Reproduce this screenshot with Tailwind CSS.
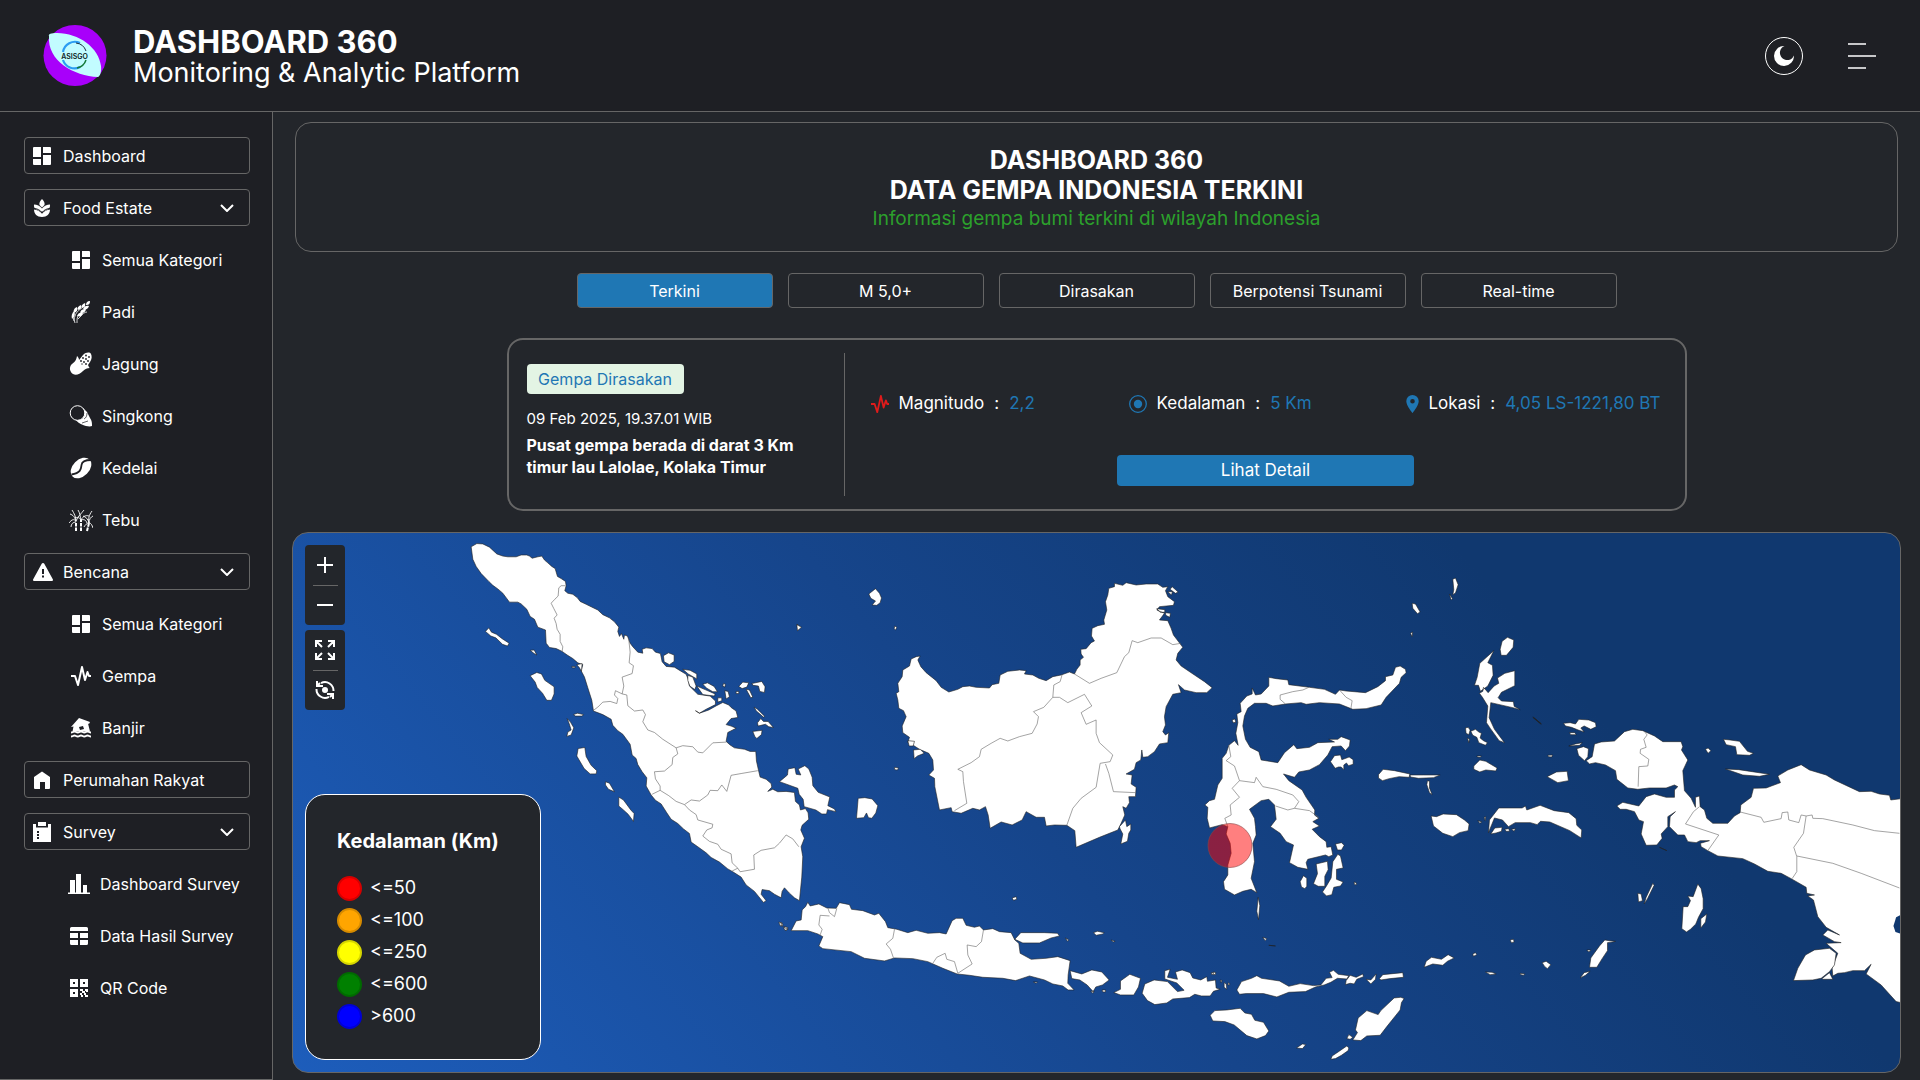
<!DOCTYPE html>
<html lang="id">
<head>
<meta charset="utf-8">
<meta name="viewport" content="width=device-width, initial-scale=1">
<title>Dashboard 360</title>
<script src="https://cdn.jsdelivr.net/npm/@tailwindcss/browser@4"></script>
</head>
<body class="flex min-h-screen flex-col bg-[#23262b] font-[Inter,sans-serif] text-white">
<svg class="hidden" aria-hidden="true">
  <symbol id="i-dash" viewBox="0 0 18 18"><path fill="currentColor" d="M1 0h7v10H0V1a1 1 0 0 1 1-1ZM10 0h7a1 1 0 0 1 1 1v5h-8ZM0 12h8v6H1a1 1 0 0 1-1-1ZM10 8h8v9a1 1 0 0 1-1 1h-7Z"/></symbol>
  <symbol id="i-chev" viewBox="0 0 14 8"><path fill="none" stroke="currentColor" stroke-width="2" d="m1 1 6 6 6-6"/></symbol>
  <symbol id="i-pulse" viewBox="0 0 20 20"><path fill="none" stroke="currentColor" stroke-width="2" stroke-linejoin="round" d="M0 10h4l3 9L11 1l3 13 2.500-8 1.500 4h2"/></symbol>
</svg>

<header class="flex h-28 items-center justify-between border-b border-[#666] bg-[#1e1f24] pr-11 pl-[43px]">
  <div class="flex items-center gap-[26px]">
    <svg class="h-[61px] w-16" viewBox="0 0 64 61" role="img" aria-label="ASISGO">
      <ellipse cx="32" cy="30.500" rx="31.500" ry="30.500" fill="#a800fa"/>
      <path d="M6 11C5 9 8 8 14 8c22 0 42 15 44 33 .6 5-.6 10-3 11C31 51 4 36 6 11Z" fill="#c2fcff"/>
      <path d="M20 27a12 12 0 0 1 17-9M20 35a12 12 0 0 0 17 7" fill="none" stroke="#2b9cf2" stroke-width="2.200"/>
      <path d="M33 18a12 12 0 0 1 10 8" fill="none" stroke="#1d2e3e" stroke-width="1"/>
      <path d="M43 35a12 12 0 0 1-9 8" fill="none" stroke="#157a3a" stroke-width="1.500"/>
      <text x="31.500" y="33.500" text-anchor="middle" font-family="Inter,sans-serif" font-weight="600" font-size="7" fill="#0b1c24">ASISGO</text>
    </svg>
    <div class="pt-1">
      <p class="text-[31px] leading-[30px] font-bold">DASHBOARD 360</p>
      <p class="text-[27px] leading-[31px]">Monitoring &amp; Analytic Platform</p>
    </div>
  </div>
  <div class="flex items-center gap-[45px]">
    <button type="button" aria-label="Mode gelap" class="flex size-[38px] items-center justify-center rounded-full border border-white">
      <svg class="size-5" viewBox="0 0 20 20"><path fill="#fff" d="M10.500 0A10 10 0 1 0 20 9.500 7.300 7.300 0 1 1 10.500 0Z"/></svg>
    </button>
    <button type="button" aria-label="Menu">
      <svg class="h-[26px] w-7" viewBox="0 0 28 26"><path stroke="#fff" stroke-width="1.600" d="M0 1h18M0 13h28M0 25h18"/></svg>
    </button>
  </div>
</header>

<div class="flex flex-1">
  <nav class="w-[273px] shrink-0 border-r border-b border-[#666] bg-[#1e1f24] px-6 pt-[25px] text-base">
    <ul class="flex w-[226px] flex-col gap-[15px]">
      <li><a href="#" class="flex h-[37px] items-center gap-3 rounded border border-[#666] pl-2"><svg class="size-[18px]"><use href="#i-dash"/></svg>Dashboard</a></li>
      <li><button type="button" class="flex h-[37px] w-full items-center gap-3 rounded border border-[#666] pr-[15px] pl-2">
        <svg class="size-[18px]" viewBox="0 0 18 18"><path fill="#fff" d="M9 0c2 2 3 4 2.500 6L9 8.500 6.500 6C6 4 7 2 9 0ZM1 5.500c3 0 6 1.500 8 4 2-2.500 5-4 8-4 .3 2-.5 3.500-1.500 4.500L9 13 2.500 10C1.500 9 .7 7.500 1 5.500ZM1 10.500c3 .3 6 1.700 8 4.200 2-2.500 5-3.900 8-4.200 0 4.500-3 7.500-8 7.500s-8-3-8-7.500Z"/><path fill="none" stroke="#1e1f24" d="M1 9.500c3 0 6 1.500 8 4 2-2.500 5-4 8-4"/></svg>
        Food Estate<svg class="ml-auto h-2 w-3.5"><use href="#i-chev"/></svg></button></li>
      <li><a href="#" class="flex h-[37px] items-center gap-[9px] pl-[45px]"><svg class="mx-[3px] size-[18px]"><use href="#i-dash"/></svg>Semua Kategori</a></li>
      <li><a href="#" class="flex h-[37px] items-center gap-[9px] pl-[45px]">
        <svg class="size-6" viewBox="0 0 24 24" fill="#fff"><path d="M21 1c-3 0-4 2-4 4 3 0 4-1 4-4ZM16 3c-3 1-4 3-3 5 2-1 4-2 3-5ZM12 5c-3 1-4 3-3 5 3-1 4-2 3-5ZM8 7c-3 1-4 4-3 6 3-1 4-3 3-6ZM5 11c-2 2-3 5-2 8 2-2 4-4 2-8ZM20 6c-2-1-5 0-6 3 3 1 5 0 6-3ZM17 9.500c-3-1-5 0-6 3 3 1 5 0 6-3ZM14 13c-3-1-5 0-6 3 3 1 5 0 6-3Z"/><path d="M16 6C11 9 7 12 6 16c-1 2-1 4 0 7M10 14c-2 3-2 5-2 9M12 16c1-2 4-4 6-4M9 19l3-3M4 17l1 4" fill="none" stroke="#fff" stroke-width=".8"/></svg>Padi</a></li>
      <li><a href="#" class="flex h-[37px] items-center gap-[9px] pl-[45px]">
        <svg class="size-6" viewBox="0 0 24 24"><path fill="#fff" d="M8 4c1 1 2 2 2 4l4-5c3-3 7-3 8-1s1 5-1 8l-2 3c1 2 1 3 2 3-3 0-5 1-7 3-3 3-7 5-10 3S0 16 2 13c2-2 5-3 6-9Z"/><g fill="#1e1f24"><circle cx="17" cy="3.500" r=".9"/><circle cx="20" cy="5" r=".9"/><circle cx="14" cy="6" r=".9"/><circle cx="17" cy="7" r=".9"/><circle cx="12" cy="9" r=".9"/><circle cx="15" cy="10" r=".9"/><circle cx="19" cy="9" r=".9"/><circle cx="17" cy="12" r=".9"/><circle cx="13" cy="12" r=".7"/></g></svg>Jagung</a></li>
      <li><a href="#" class="flex h-[37px] items-center gap-[9px] pl-[45px]">
        <svg class="size-6" viewBox="0 0 24 24"><path fill="#fff" d="m14 4 4 4c1 2 2 4 3 6 2 3 2 5 2 8-2 1-7 0-9-1-3-1-6-3-8-6Z"/><circle cx="8.500" cy="9" r="7.300" fill="#1e1f24" stroke="#fff"/><path d="m13 19 6-2M18 9c0 3-1 5-3 6" fill="none" stroke="#1e1f24" stroke-width=".7"/></svg>Singkong</a></li>
      <li><a href="#" class="flex h-[37px] items-center gap-[9px] pl-[45px]">
        <svg class="size-6" viewBox="0 0 24 24"><ellipse cx="12" cy="12" rx="12" ry="8.300" transform="rotate(-45 12 12)" fill="#fff"/><path d="M22 4c-4 0-9 1-9.500 5C12 13 12 17 2.500 18.500" fill="none" stroke="#1e1f24" stroke-width="1.800"/></svg>Kedelai</a></li>
      <li><a href="#" class="flex h-[37px] items-center gap-[9px] pl-[45px]">
        <svg class="size-6" viewBox="0 0 24 24" fill="none" stroke="#fff"><path stroke-width="2" stroke-dasharray="3.500 1" d="M7 23v-9M12 23V12M18 23l2-8"/><path stroke-width=".9" d="M7 14C6 9 4 7 1 6M7 13C5 11 3 11 0 15M7 13c0-4-2-8-4-11M7 13c2-5 5-7 8-11M12 12c-1-4-1-7-3-10M12 12c-2-3-4-3-6-2M12 12c2-4 5-5 8-4M12 12c3-1 5 0 6 3M20 15c-1-4 0-8 3-12M20 15c0-4 2-6 4-7M20 15c-1-4-3-6-6-7M20 15c2 0 3 2 4 5M20 15c-2 0-4 2-5 4M7 14c-3 0-5 2-5 5"/></svg>Tebu</a></li>
      <li><button type="button" class="flex h-[37px] w-full items-center gap-2.5 rounded border border-[#666] pr-[15px] pl-2">
        <svg class="h-[18px] w-5" viewBox="0 0 20 18"><path fill="#fff" d="M10 0c.6 0 1 .3 1.300.8l8.500 15.400c.5 1-.1 1.800-1.300 1.800h-17C.300 18-.3 17.200.2 16.200L8.700.8C9 .3 9.400 0 10 0Z"/><path stroke="#1e1f24" stroke-width="2" d="M10 6v5M10 12.500v2"/></svg>
        Bencana<svg class="ml-auto h-2 w-3.5"><use href="#i-chev"/></svg></button></li>
      <li><a href="#" class="flex h-[37px] items-center gap-[9px] pl-[45px]"><svg class="mx-[3px] size-[18px]"><use href="#i-dash"/></svg>Semua Kategori</a></li>
      <li><a href="#" class="flex h-[37px] items-center gap-[9px] pl-[45px]"><svg class="mx-0.5 size-5"><use href="#i-pulse"/></svg>Gempa</a></li>
      <li><a href="#" class="flex h-[37px] items-center gap-[9px] pl-[45px]">
        <svg class="mx-0.5 size-5" viewBox="0 0 20 20"><path fill="#fff" d="M8 0 19 4l-1 2-1-.5 2 8H1.500l1-5L0 9 8 0Z"/><path fill="#1e1f24" d="m8 9 4-1 1 3-4 1Z"/><path fill="none" stroke="#fff" stroke-width="1.800" d="M0 14.500c2 0 2-1 3.500-1s1.500 1 3.300 1 1.500-1 3.200-1 1.500 1 3.300 1 1.500-1 3.200-1 1.500 1 3.500 1M0 18.500c2 0 2-1 3.500-1s1.500 1 3.300 1 1.500-1 3.200-1 1.500 1 3.300 1 1.500-1 3.200-1 1.500 1 3.500 1"/></svg>Banjir</a></li>
      <li><a href="#" class="flex h-[37px] items-center gap-3 rounded border border-[#666] pl-2">
        <svg class="size-[18px]" viewBox="0 0 18 18"><path fill="#fff" d="M9 .5 17 6v11a1 1 0 0 1-1 1h-4v-7H7v7H2a1 1 0 0 1-1-1V6Z"/></svg>Perumahan Rakyat</a></li>
      <li><button type="button" class="flex h-[37px] w-full items-center gap-3 rounded border border-[#666] pr-[15px] pl-2">
        <svg class="h-5 w-[18px]" viewBox="0 0 18 20"><path fill="#fff" d="M0 2h3v3.500h12V2h3v18H0ZM5 0h8v4H5Z"/><path fill="#1e1f24" d="M4 9h2v2H4ZM4 12h2v2H4ZM4 15h2v2H4Z"/></svg>
        Survey<svg class="ml-auto h-2 w-3.5"><use href="#i-chev"/></svg></button></li>
      <li><a href="#" class="flex h-[37px] items-center gap-[9px] pl-[43px]">
        <svg class="mx-px h-5 w-[22px]" viewBox="0 0 22 20"><path fill="#fff" d="M0 18.500h2V6h5v12.500h1V0h5v18.500h2V11h4v7.500h3V20H0Z"/></svg>Dashboard Survey</a></li>
      <li><a href="#" class="flex h-[37px] items-center gap-[9px] pl-[43px]">
        <svg class="mx-[3px] size-[18px]" viewBox="0 0 18 18"><path fill="#fff" d="M1.500 0h15A1.500 1.500 0 0 1 18 1.500V4H0V1.500A1.500 1.500 0 0 1 1.500 0ZM0 6h8v5H0ZM10 6h8v5h-8ZM0 13h8v5H1.500A1.500 1.500 0 0 1 0 16.500ZM10 13h8v3.500a1.500 1.500 0 0 1-1.500 1.500H10Z"/></svg>Data Hasil Survey</a></li>
      <li><a href="#" class="flex h-[37px] items-center gap-[9px] pl-[43px]">
        <svg class="mx-[3px] size-[18px]" viewBox="0 0 18 18"><path fill="#fff" fill-rule="evenodd" d="M0 0h8v8H0ZM3 3v2h2V3ZM10 0h8v8h-8ZM13 3v2h2V3ZM0 10h8v8H0ZM3 13v2h2v-2ZM10 10h3v2h-3ZM15 10h3v3h-2v-1h-1ZM12 12h3v2h-3ZM10 14h2v2h-2ZM14 14h2v2h2v2h-3v-2h-1ZM11 16h2v2h-2Z"/></svg>QR Code</a></li>
    </ul>
  </nav>

  <main class="flex min-w-0 flex-1 flex-col px-[19px] pt-2.5 pb-[7px]">
    <section class="mx-[3px] flex h-[130px] flex-col items-center justify-center rounded-2xl border border-[#666] pt-1">
      <h1 class="text-center text-[25px] leading-[30px] font-bold">DASHBOARD 360<br>DATA GEMPA INDONESIA TERKINI</h1>
      <p class="text-[19px] leading-7 text-[#2ca02c]">Informasi gempa bumi terkini di wilayah Indonesia</p>
    </section>

    <div class="mt-[21px] flex justify-center gap-[15px] text-base">
      <button type="button" class="h-[35px] w-[196px] rounded border border-[#666] bg-[#1f77b4]">Terkini</button>
      <button type="button" class="h-[35px] w-[196px] rounded border border-[#666]">M 5,0+</button>
      <button type="button" class="h-[35px] w-[196px] rounded border border-[#666]">Dirasakan</button>
      <button type="button" class="h-[35px] w-[196px] rounded border border-[#666]">Berpotensi Tsunami</button>
      <button type="button" class="h-[35px] w-[196px] rounded border border-[#666]">Real-time</button>
    </div>

    <section class="mx-auto mt-[30px] flex w-[1180px] rounded-2xl border-2 border-[#666] py-[13px]">
      <div class="w-[336px] border-r border-[#666] pt-[11px] pr-6 pb-[18px] pl-[18px]">
        <span class="flex h-[30px] w-[157px] items-center justify-center rounded bg-[#e3f4e4] text-base text-[#1f77b4]">Gempa Dirasakan</span>
        <p class="mt-[14px] text-[15px] leading-[22px]">09 Feb 2025, 19.37.01 WIB</p>
        <p class="mt-1 text-base leading-[22px] font-bold">Pusat gempa berada di darat 3 Km<br>timur lau Lalolae, Kolaka Timur</p>
      </div>
      <div class="flex flex-1 flex-col items-center pt-[39px] pr-6 pl-[26px] text-[17px]">
        <div class="flex h-6 w-full items-center justify-between">
          <p class="flex items-center gap-2.5"><svg class="size-[18px] text-[#e01b1b]"><use href="#i-pulse"/></svg>Magnitudo<span>:</span><span class="text-[#1f77b4]">2,2</span></p>
          <p class="flex items-center gap-2.5"><svg class="size-[18px]" viewBox="0 0 18 18"><circle cx="9" cy="9" r="8.300" fill="none" stroke="#1f77b4" stroke-width="1.300"/><circle cx="9" cy="9" r="4.200" fill="#1f77b4"/></svg>Kedalaman<span>:</span><span class="text-[#1f77b4]">5 Km</span></p>
          <p class="flex items-center gap-2.5"><svg class="h-[18px] w-[13px]" viewBox="0 0 13 18"><path fill="#1f77b4" fill-rule="evenodd" d="M6.500 0A6.200 6.200 0 0 1 12.700 6.300C12.700 11 6.500 18 6.500 18S.3 11 .3 6.300A6.200 6.200 0 0 1 6.500 0Zm0 4a2.300 2.300 0 1 0 0 4.600 2.300 2.300 0 0 0 0-4.600Z"/></svg>Lokasi<span>:</span><span class="text-[#1f77b4]">4,05 LS-1221,80 BT</span></p>
        </div>
        <button type="button" class="mt-[39px] h-[31px] w-[297px] rounded bg-[#1f77b4]">Lihat Detail</button>
      </div>
    </section>

    <section class="relative mt-[21px] min-h-[541px] flex-1 overflow-hidden rounded-2xl border border-[#666] bg-[linear-gradient(50deg,#1d5dbb,#16458b_46%,#10386f_78%)]" aria-label="Peta gempa Indonesia">
      <svg class="absolute inset-0 h-full w-full" viewBox="293 533 1608 539" preserveAspectRatio="xMidYMid slice">
        <g fill="#fff" stroke="#222" stroke-width="1.800" stroke-linejoin="round">
          <!-- Sumatra -->
          <g transform="translate(290 520) scale(.3333 .3571)">
            <path d="M545,75L562,66 580,67 600,76 622,95 640,101 655,103 680,103 695,98 712,98 720,101 728,107 745,103 757,101 765,112 775,120 787,130 797,136 804,158 815,164 828,172 830,184 826,198 835,205 850,208 864,218 872,228 890,236 905,243 925,252 940,265 960,274 975,285 988,300 985,312 990,326 996,318 1003,334 1005,322 1014,325 1022,345 1030,355 1045,370 1060,373 1058,362 1070,358 1088,360 1098,370 1113,374 1118,397 1130,410 1155,412 1172,422 1190,432 1197,448 1200,465 1225,488 1262,493 1278,507 1278,517 1250,530 1230,541 1218,534 1230,541 1258,532 1281,520 1300,511 1318,518 1325,525 1340,535 1345,553 1325,556 1310,573 1325,577 1340,583 1315,595 1310,620 1322,630 1335,638 1365,642 1382,648 1399,648 1401,675 1407,700 1412,720 1430,726 1445,738 1447,748 1435,760 1450,754 1465,761 1490,760 1515,763 1518,788 1530,798 1533,812 1548,808 1556,820 1558,838 1538,855 1534,868 1545,891 1535,915 1540,943 1537,1000 1530,1066 1515,1058 1500,1045 1485,1030 1478,1040 1475,1058 1455,1048 1440,1038 1418,1035 1415,1048 1430,1066 1422,1071 1408,1055 1395,1040 1370,1022 1355,1000 1330,985 1315,977 1290,958 1265,945 1250,932 1225,915 1205,902 1200,878 1182,865 1165,850 1145,838 1132,820 1115,795 1098,785 1085,770 1070,745 1072,722 1058,705 1045,685 1040,668 1028,658 1022,628 1000,600 985,590 970,575 965,558 940,545 912,535 907,505 895,470 885,440 875,422 880,405 865,400 850,388 833,378 818,368 800,360 780,357 770,345 768,308 745,300 735,278 722,270 712,250 695,235 685,230 660,230 640,205 625,193 610,183 598,172 575,150 560,130 550,110Z"/>
            <path d="M588,312l10-10 8,12 15,6 18,13 20,12-5,8-15-5-20-18-15-5ZM722,365l12-1 8,14-8-4ZM847,410l10,0 0,4-9,0ZM862,405l16-3-2,22-6-10ZM722,436l20-9 14,4 10,18 28,18 0,20-8,18-14,0-13-20-16-16-6-15ZM852,545l12-4 18,4-4,4-20,0ZM833,556l10,10 10,16-8,20-13,4 3-12 10-6-6-18ZM866,640l20-3 4,25 15,25 17,15-2,9-18,0-18-15-22-35ZM948,733l12,4 15,24-18-7-9-12ZM988,776l14,8 22,28 10,10-2,22-16-20-14-12-14-11ZM1122,380l15-8 17,6 0,18-14,9-16-8ZM1180,418l22,3 20,10 0,14-26-14ZM1195,435l15,5 10,25-4,10-15-10-6-16ZM1240,460l14-4 20,10 10,15-14,0-18-10ZM1222,465l25,10 30,12-2,6-35-4ZM1285,498l12,0 0,8-12,4ZM1302,458l6,2-2,8-6-3ZM1306,478l10,2 4,15-10,6ZM1340,480l8,0 0,6-8,0ZM1348,466l12,-12 18,2-6,12-14,4ZM1370,474l10,2 10,20-6,2ZM1387,458l30-6 10,15-2,16-14-3-4-15-16-2ZM1394,524l10,6 22,20-4,2-22-18ZM1404,568l10-12 8,8 14,0 16,17-14-2-10-7-22,5ZM1390,592l28-3-2,12-14,11-6-6ZM1523,292l10,7-8,10ZM1468,1126l10,2 2,8-8,0ZM1484,1138l12,4-6,8Z"/>
            <path fill="none" stroke="#666" d="M828,184L815,184 808,190 806,213 796,222 785,233 793,248 803,266 794,275 800,290 803,306 812,320 812,340 820,355 818,368M1018,335L1022,370 1019,400 1032,408 1028,430 1010,436 998,440 1003,465 998,487M998,487L978,478 975,490 985,500 982,514 962,508 940,510 925,524 912,533M998,487L1012,490 1015,520 1035,535 1060,532 1068,545 1060,565 1075,588 1095,595 1120,614 1160,638 1180,632 1210,635 1225,650 1240,652 1270,624 1310,622M1160,638L1165,655 1150,665 1148,685 1125,703 1095,705 1098,725 1112,745 1112,757 1088,768M1112,757L1138,772 1160,788 1185,797 1205,784 1230,787 1255,770 1262,757 1285,758 1297,742 1312,760 1325,715 1355,710 1405,702M1185,797L1200,812 1220,825 1225,840 1270,852 1268,862 1252,868 1240,885 1260,900 1285,908 1295,922 1325,935 1328,960 1345,975 1352,985 1395,978 1393,938 1415,925 1455,918 1470,905 1490,882 1510,893 1528,915M1345,975L1328,983"/>
          </g>
          <!-- Kalimantan, Jawa, Bangka Belitung, Bali, Nusa Tenggara Barat -->
          <g transform="translate(780 560) scale(.3333)">
            <path d="M395,297L410,290 422,288 415,300 424,320 440,338 455,350 470,362 485,382 508,396 535,388 550,380 570,378 590,382 630,384 638,374 658,370 662,345 685,334 720,330 740,332 735,342 760,345 778,355 800,362 820,350 845,345 870,336 885,342 892,328 902,315 902,300 912,292 905,282 904,268 920,266 935,248 945,243 936,228 938,205 955,197 975,193 973,180 982,150 978,125 985,105 988,85 1005,80 1005,70 1030,76 1040,68 1070,75 1100,72 1135,72 1150,82 1165,80 1158,92 1165,110 1185,125 1182,136 1140,140 1132,150 1155,160 1140,180 1165,182 1175,205 1182,225 1210,262 1195,280 1190,300 1205,318 1245,345 1275,365 1298,383 1282,398 1250,398 1215,390 1197,374 1205,398 1180,403 1160,440 1155,470 1158,495 1150,515 1158,525 1168,518 1165,548 1140,552 1125,575 1105,590 1090,592 1087,570 1084,600 1070,608 1065,628 1040,642 1058,645 1055,672 1070,682 1068,710 1048,710 1050,728 1040,745 1030,740 1036,765 1025,790 1015,810 960,832 890,862 886,812 862,796 825,795 800,798 795,772 770,772 740,755 728,780 698,795 665,786 632,805 626,765 618,740 600,750 580,745 545,760 518,755 515,743 480,750 474,720 466,680 465,655 448,645 462,630 460,600 448,580 420,568 400,555 385,548 390,532 370,518 368,498 380,470 372,452 358,445 355,420 350,400 358,395 355,370 368,350 370,330 390,318ZM1178,80l18,16-8,4-16-12ZM1165,95l14,0-3,10ZM1132,146l24,3 0,8-14,0ZM1158,158l15,2-2,12-12-6Z"/>
            <path d="M268,102l20-16 12,14 6,14-4,14-10,8-14-1 10-12-14-8ZM52,194l14,8-12,10ZM346,198l6,4-4,8-4-4ZM385,542l20,2-4,14-12,0ZM402,570l20-2 12,12-20,8-10,8ZM345,622l12,2-3,6-8-1ZM0,665l24-20 2-18 20-4 4,20 14,2-8-18 20-10 12,10 10,25 2,25 16,20 35,14-6,26 20,10 4,8-25-6-3,13-14,0-18-12-35-10-3-22-12-15-4-18ZM236,715l20-2 22,4 17,20-6,22-12,16-10-2-6-14-8,14-22,2ZM1020,800l18-20 4,20 12-8 0,18-6,10-4,24-20,8 6-30-8-15ZM698,1014l12-4 2,8-10,3Z"/>
            <path d="M35,1112L50,1083 65,1080 68,1050 78,1040 85,1027 92,1038 118,1032 142,1044 170,1045 180,1028 210,1034 216,1048 250,1052 285,1065 298,1060 318,1085 325,1103 352,1108 385,1118 410,1111 445,1120 480,1118 500,1122 518,1082 530,1075 550,1075 560,1096 585,1102 600,1098 612,1110 640,1106 660,1115 695,1118 706,1140 718,1150 722,1180 755,1198 800,1195 835,1190 872,1202 866,1245 865,1270 884,1290 866,1290 850,1278 820,1272 795,1260 750,1248 708,1262 670,1255 610,1252 570,1246 533,1242 490,1225 445,1205 400,1196 345,1194 315,1203 255,1195 215,1175 130,1166 118,1158 130,1130 115,1122 85,1112ZM706,1138l18-20 70,0 40,2 6,8-25,6-35,15-50,0ZM858,1134l10,6-4,4ZM942,1118l12-4 20,4-4,4-20,4ZM995,1140l12,4-6,2ZM4,1088l6,6-3,6ZM12,1102l14,6-10,3ZM872,1232l35,10 30-12 30,6 22,24-20,15-20,6-8,14-18-20-22-15-24-4ZM968,1290l10,0 0,6-8,0ZM934,1294l10,0-4,6ZM1003,1298l20-10 0-25 28-20 32,12-6,26-14,24-40,0ZM1088,1300l8-28 28-12 40,5 30,30 20-4-22-22-36-12 0-25 16-4-8,24 30,6-6-22 20-6 24,8 8,16 24,6 18-10 2,14 24-4 2,24 12,4-20,6-10,14-26,0-20-5-16,10-50,4-18,12-36,5-22-12ZM1296,1238l10,0-2,6-8-1ZM762,1266l12,0-4,4Z"/>
            <path fill="none" stroke="#666" d="M848,344L842,365 823,375 820,412 793,442 762,455 777,470 773,492 758,520 720,530 685,543 662,535 635,550 605,568 600,590 575,608 535,628 550,635 552,665 562,730 525,752M820,412L840,412 865,428 915,403 937,438 905,458 920,493 950,480 950,520 960,548 1000,585 992,605 962,610 950,682 905,715 880,745 862,796M885,342L930,370 965,355 1012,338 1035,290 1048,278 1058,242 1075,248 1115,234 1145,234 1180,254 1204,250M978,612L988,640 1002,695 1068,698M145,1044L150,1058 165,1070 172,1045M150,1068L122,1066 118,1095 128,1108 122,1125M345,1108L340,1135 320,1152 333,1168 342,1194M612,1110L606,1145 590,1160 563,1155 565,1185 578,1212 535,1240 525,1205 502,1198 497,1180 472,1192 460,1210"/>
          </g>
          <!-- Sulawesi, Nusa Tenggara Timur, Maluku -->
          <g transform="translate(1160 560) scale(.3333)">
            <path d="M208,556L225,542 236,556 229,520 235,488 232,462 245,455 242,430 262,408 278,402 278,384 288,405 305,402 328,378 328,352 350,356 385,360 388,374 450,382 495,388 528,403 540,390 560,393 618,398 655,380 678,362 678,350 700,345 708,322 722,318 738,328 740,338 725,352 720,370 680,412 665,435 620,446 580,448 540,432 480,428 440,433 425,428 378,432 340,438 320,430 285,430 265,445 255,468 250,498 258,538 272,562 298,575 305,600 355,608 375,578 403,554 412,566 450,562 475,548 525,546 508,538 535,538 545,530 572,540 570,558 558,572 545,558 518,560 505,585 480,614 450,630 418,636 405,652 372,642 388,662 428,690 440,712 466,750 465,765 478,775 460,785 480,798 458,808 480,830 500,845 502,862 515,860 520,885 508,890 498,885 445,898 440,908 445,928 415,922 390,908 402,855 380,845 362,820 333,800 350,778 345,735 328,718 305,722 270,748 285,775 288,800 290,825 280,850 285,905 275,955 292,998 275,988 250,994 225,1005 195,988 192,965 205,945 205,915 215,880 212,850 200,822 205,800 188,794 150,804 143,775 145,742 136,735 150,722 165,718 175,675 188,655 188,595 200,580Z"/>
            <path d="M218,480l8-3 3,10-8,1ZM513,605l12-18 18-2 4,14 12-4 10-4 12,8 0,14-14,4-6-8-8,6 0,14-8-8-8,0-10,4ZM528,852l18-4 8,8-8,14-12,0ZM422,965l10-18 10,8 0,24-6,7-10-5ZM470,912l34-8 2,25-10,20 0,30-20,0-14-8 12-30ZM520,905l15-22 8,5 8,36-20,4 0,30 20,8-8,12-20,4-6,22-16,4-12-12 12-18 14-24ZM584,966l6,2 1,6-6,0ZM296,1012l5,25-4,42-5-25ZM310,1132l12,4-5,6ZM328,1156l20,2ZM880,58l8-4 8,20-8,25-8,5 3-15ZM870,102l9,14-4,4ZM758,130l10,2 14,24-8,5-14-16ZM753,220l6-4-1,14ZM1022,268l6-24 16-12 19,8-2,22-20,24-16,0ZM945,376l8-24 8-42 42-38-18,36 14,8 2,30-16,32-22,16-6-18ZM960,400l10-6 2-12 14,16 18,-20 14-8-4-16 22-14 30-8 0,45-40,20-10,16 10,10 36,2 2,14 18,10-22-6-66,-15-5,45 16,35 30,40-16-6-26-36-12-18 4-50-16-26ZM918,504l8-2 6,8-4,14-8-4ZM924,534l6,4-2,10ZM934,514l14-6 10,8 8,4-4,14 10,8 12,6-6,8-10-4-10-4-6-16-12-6ZM952,588l14,0-4,4-8-1ZM943,618l18-18 18,4 34,20-4,9-30-3-18,6-18-8ZM1122,472l24,20ZM657,644l14-16 34,4 46,10-2,10-30-2-30,6-20,6-12-8ZM752,645l40,0 50,0-20,8-45,2-24-4ZM804,662l6,2 0,20 8,20-8-6-8-24ZM815,768l16,2 20-8 40,2 24,16 14,12-3,20-26,6-20,12-30-10-28-22ZM955,782l12,4-6,4ZM974,772l5-2-2,12ZM990,780l28-36 70,0 10-6 4,12 40-14 42,16 44,6 22,18 2,20 15,14-2,24-34-22-60-26-28-2-10,10-20-6-46,0-20,12-18-20-24-6-18,44ZM994,822l12-18 22,-2-2,12-16,5ZM1036,808l12-2 2,8-10,0ZM1056,808l12-2-4,8ZM1165,586l14-1-2,6-10-1ZM1163,650l28-14 32-2 4,28-32,6ZM1052,1140l10-2 2,8-8,2ZM940,1182l8-4 4,6-10,5ZM794,1222l6-18 16-12 30,6 20-14 18,10-20,10-14,12-30-4ZM978,1236l20,1 12,5-18,2ZM1082,1240l14,2-4,4-8-2ZM1148,1208l12-4 14,10-10,12-8-6Z"/>
            <path d="M232,1290l14-25 30-10 16-8 14,8 54,8 28,16 34-8 40,6 22,-2 16-20 18-2-8-16 12-6 14,12 32,4-6,10-28,-2-20,12-20,8-26,6-30,14-50,2-36,14-40-10-52,0-20,2ZM162,1236l7,2-2,6-6-2ZM182,1260l6,2-3,6ZM194,1268l6,4 2,16-8-6ZM206,1268l6,4-6,4ZM560,1262l12-16 18,6 20-10 2,8-20,8-8,14-12-2-14,4ZM620,1258l14,2 16,-18-2,16-14,14ZM660,1256l10-12 60-6 2,14-40,4-28,4ZM152,1366l14-14 36-2 40-5 14,14 20,4 10,18 26,6 16,26-10,14-26,10-30-10-38-32-28-10-36-2ZM411,1464l18-12 10,2-10,12ZM514,1498l4-10 18-12 26-18 6,6-2,8-20,14-18,10ZM562,1436l6-12 12,8-8,6ZM580,1440l14-22-6-8 8-36 26-22 34,12 8-12 40-38 20-2 10,4-8,12-4,22-40,50-20,26-40,2-18,14Z"/>
            <path fill="none" stroke="#666" d="M208,556L214,590 200,602 225,618 240,662 285,668 290,652 310,680 350,688 400,705 418,725 405,745 385,750 348,738M405,745L450,752 478,772M240,662L218,685 240,712 212,735 215,765 196,775 205,800M448,382L430,390 400,395 362,405 362,418 378,432M540,390L560,412 578,422 574,447"/>
          </g>
          <!-- Papua and the islands around it -->
          <g transform="translate(1500 560) scale(.3333)">
            <path d="M285,552L305,546 345,543 375,515 400,508 430,512 465,528 490,545 545,545 550,560 546,570 565,600 550,632 555,692 575,715 588,742 588,712 600,708 602,740 615,750 622,775 640,790 685,790 705,768 722,758 724,735 755,712 762,685 800,684 843,668 835,648 865,630 905,614 930,630 980,645 1005,660 1080,695 1115,694 1140,702 1170,706 1174,720 1215,715 1215,1330 1190,1325 1145,1275 1100,1242 1115,1213 1095,1232 1060,1232 1035,1238 1015,1240 1000,1248 998,1225 1015,1180 980,1150 1025,1148 1005,1145 970,1125 985,1110 1020,1125 980,1102 955,1070 942,1020 925,1008 945,1005 922,1000 920,982 875,956 845,940 805,934 765,912 730,896 655,888 625,872 605,860 603,850 630,842 602,842 590,848 565,845 555,825 535,825 510,800 512,770 528,755 505,770 505,800 485,822 488,835 472,855 440,856 425,822 432,785 418,780 405,755 380,748 362,748 352,738 370,727 418,738 440,710 465,702 500,712 525,712 525,690 535,680 525,675 500,684 450,684 415,688 385,684 352,658 348,632 318,615 288,608 270,612 260,602 278,590Z"/>
            <path d="M192,490l20-2 16,4 10-14 30,2 20,8 2,12-16,8-20-10-10,6 10,12-18-6-20-8-18-4ZM210,518l16,0 4,6-16,0ZM208,558l20-6 20-4-8,8ZM232,566l20-6 15,6-2,24-10,12-18-16ZM100,472l24,20ZM618,568l8-4 8,8-8,8ZM672,538l20,2 28,4 24,30 18,6-12,6-38-2-4-24-28-6ZM678,627l40,2 40,6 52,8-30,6-50-4ZM480,862l22,10ZM415,1000l10,2 4,20-12,4ZM460,970l4,6-20,40-10,16 6-20ZM595,972l10,14 6,30 0,30-14,26-8,20-16,16-12,8-14-10 4-66 14,0 8-18-8-14 16,2ZM604,1076l18-14-4,24-14,18 0-12ZM328,1142l20,2-10,2-14,2 0,24-16,24-16,26-22,0 4-28 26-36 16-18ZM262,1170l12,0-6,6ZM242,1254l12-16 18-4-14,12ZM882,1262L895,1225 918,1185 945,1170 990,1165 1010,1180 1005,1215 990,1235 965,1255 940,1260ZM968,1256l22-18 10,20-30,0Z"/>
            <path fill="#10386f" stroke="none" d="M1206,1064l-16,8-8,26 6,18 18,6Z"/>
            <path fill="none" stroke="#666" d="M435,515L443,525 433,538 440,562 423,568 422,580 448,598 445,618 418,620 416,680M600,740L582,755 558,792 658,825 625,872M722,756L785,772 793,787 845,776 848,758 865,756 868,780 898,788 905,765 920,768 938,765 940,775 970,776 1060,795 1125,812 1200,820M920,768L912,820 883,862 892,890 892,935 878,956M892,888L1000,910 1085,940 1200,984"/>
          </g>
        </g>
        <circle cx="1230.500" cy="845.500" r="22" fill="#f00" fill-opacity=".5" stroke="#844" stroke-opacity=".6"/>
      </svg>

      <div class="absolute top-3 left-3 flex flex-col gap-[5px]">
        <div class="flex h-20 w-10 flex-col items-center rounded bg-[#23262b]">
          <button type="button" aria-label="Perbesar" class="flex flex-1 items-center"><svg class="size-4" viewBox="0 0 16 16"><path stroke="#fff" stroke-width="2" d="M0 8h16M8 0v16"/></svg></button>
          <hr class="w-[25px] border-[#666]">
          <button type="button" aria-label="Perkecil" class="flex flex-1 items-center"><svg class="size-4" viewBox="0 0 16 16"><path stroke="#fff" stroke-width="2" d="M0 8h16"/></svg></button>
        </div>
        <div class="flex h-20 w-10 flex-col items-center rounded bg-[#23262b]">
          <button type="button" aria-label="Layar penuh" class="flex flex-1 items-center"><svg class="size-5" viewBox="0 0 20 20" fill="none" stroke="#fff" stroke-width="2"><path d="M1 7V1h6M1 1l6 6M13 1h6v6M19 1l-6 6M1 13v6h6M1 19l6-6M19 13v6h-6M19 19l-6-6"/></svg></button>
          <hr class="w-[25px] border-[#666]">
          <button type="button" aria-label="Atur ulang" class="flex flex-1 items-center"><svg class="size-5" viewBox="0 0 20 20" fill="none" stroke="#fff" stroke-width="2"><path d="M6 3.200A8.500 8.500 0 0 1 18.500 11M1.500 9A8.500 8.500 0 0 0 14 16.800M2 1v5h6M18 19v-5h-6M2 6l3-3M18 14l-3 3"/><circle cx="10" cy="10" r="3" fill="#fff" stroke="none"/></svg></button>
        </div>
      </div>

      <div class="absolute bottom-3 left-3 h-[266px] w-[236px] rounded-[20px] border border-white bg-[#23262b] px-[31px] pt-8">
        <h2 class="text-xl leading-7 font-bold">Kedalaman (Km)</h2>
        <ul class="mt-[17px] text-lg">
          <li class="flex h-8 items-center gap-2"><span class="size-[25px] rounded-full border-2 border-[#d60000] bg-[#f00]"></span>&lt;=50</li>
          <li class="flex h-8 items-center gap-2"><span class="size-[25px] rounded-full border-2 border-[#d68b00] bg-[#ffa500]"></span>&lt;=100</li>
          <li class="flex h-8 items-center gap-2"><span class="size-[25px] rounded-full border-2 border-[#d6d600] bg-[#ff0]"></span>&lt;=250</li>
          <li class="flex h-8 items-center gap-2"><span class="size-[25px] rounded-full border-2 border-[#006b00] bg-[#008000]"></span>&lt;=600</li>
          <li class="flex h-8 items-center gap-2"><span class="size-[25px] rounded-full border-2 border-[#0000d6] bg-[#00f]"></span>&gt;600</li>
        </ul>
      </div>
    </section>
  </main>
</div>
</body>
</html>
